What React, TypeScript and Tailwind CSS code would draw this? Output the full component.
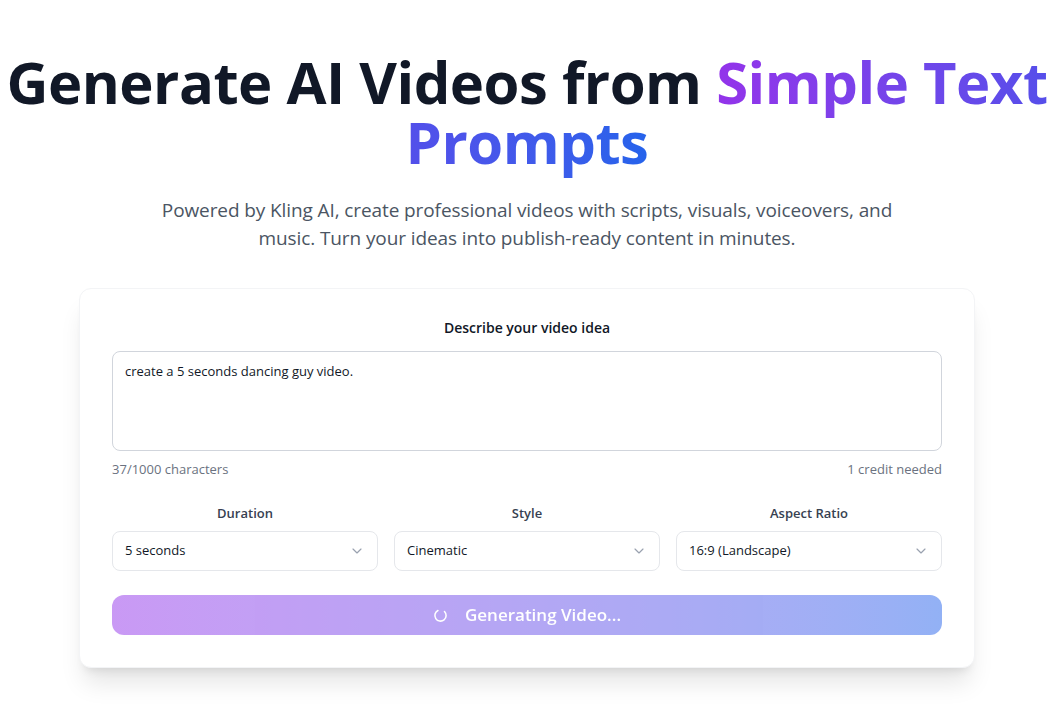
import { ChevronDown } from 'lucide-react';

const selects = [
  { label: 'Duration', value: '5 seconds' },
  { label: 'Style', value: 'Cinematic' },
  { label: 'Aspect Ratio', value: '16:9 (Landscape)' },
];

function Spinner() {
  return (
    <svg
      viewBox="0 0 24 24"
      className="h-[15px] w-[15px] -rotate-45"
      fill="none"
      stroke="currentColor"
      strokeWidth="2.5"
      strokeLinecap="round"
    >
      <path d="M21 12a9 9 0 1 1-6.219-8.56" />
    </svg>
  );
}

export default function App() {
  const prompt = 'create a 5 seconds dancing guy video.';

  return (
    <div className="min-h-screen bg-white pr-[9px] font-['Open_Sans',sans-serif] text-gray-900">
      <div className="mx-auto flex flex-col items-center pt-[52px]">
        {/* Hero */}
        <h1 className="text-center text-[58px] font-bold leading-[60px] tracking-[-0.5px] text-[#111827]">
          Generate AI Videos from{' '}
          <span className="bg-gradient-to-r from-[#9333ea] to-[#554eea] bg-clip-text text-transparent">
            Simple Text
          </span>{' '}
          <span className="bg-gradient-to-r from-[#534fea] to-[#2563eb] bg-clip-text text-transparent">
            Prompts
          </span>
        </h1>
        <p className="mt-6 max-w-3xl text-center text-[19px] leading-7 tracking-[-0.1px] text-[#4b5563]">
          Powered by Kling AI, create professional videos with scripts, visuals, voiceovers, and
          music. Turn your ideas into publish-ready content in minutes.
        </p>

        {/* Generator card */}
        <div className="mt-9 w-full max-w-4xl rounded-xl border border-gray-100 bg-white px-8 pb-8 pt-[29px] shadow-xl">
          <label className="block text-center text-sm font-semibold text-[#111827]">
            Describe your video idea
          </label>
          <textarea
            defaultValue={prompt}
            rows={4}
            className="mt-[13px] block h-[100px] w-full resize-none rounded-lg border border-gray-300 px-3 py-2.5 text-[13px] text-[#111827] outline-none"
          />
          <div className="mt-2 flex justify-between text-[13px] leading-5 text-[#6b7280]">
            <span>{prompt.length}/1000 characters</span>
            <span>1 credit needed</span>
          </div>

          <div className="mt-6 grid grid-cols-3 gap-4">
            {selects.map((s) => (
              <div key={s.label}>
                <div className="mb-2 text-center text-[13px] font-semibold leading-5 text-[#374151]">
                  {s.label}
                </div>
                <div className="flex h-10 items-center justify-between rounded-lg border border-gray-200 px-3 text-[13px] text-[#111827]">
                  <span>{s.value}</span>
                  <ChevronDown className="h-4 w-4 text-gray-400" strokeWidth={1.75} />
                </div>
              </div>
            ))}
          </div>

          <button
            disabled
            className="mt-6 flex h-10 w-full items-center justify-center gap-[17px] rounded-xl bg-gradient-to-r from-[#9333ea] to-[#2563eb] text-[17px] font-semibold text-white opacity-50"
          >
            <Spinner />
            <span>Generating Video...</span>
          </button>
        </div>
      </div>
    </div>
  );
}
